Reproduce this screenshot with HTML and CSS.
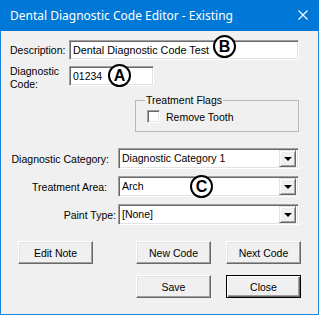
FILE: index.html
```html
<!DOCTYPE html>
<html lang="en">
<head>
    <meta charset="UTF-8">
    <title>Dental Diagnostic Code Editor - Existing</title>
    <link rel="stylesheet" href="styles.css">
</head>
<body>

<div class="window">
    <div class="titlebar">
        <span class="title">Dental Diagnostic Code Editor - Existing</span>
        <svg class="close-x" width="10" height="10" viewBox="0 0 10 10">
            <path d="M0.5 0.5 L9.5 9.5 M9.5 0.5 L0.5 9.5" stroke="#fff" stroke-width="1.1" fill="none"/>
        </svg>
    </div>

    <div class="content">
        <div class="row row-desc">
            <label class="lbl-desc">Description:</label>
            <div class="textbox tb-desc">Dental Diagnostic Code Test</div>
        </div>

        <div class="row row-code">
            <label class="lbl-code">Diagnostic<br>Code:</label>
            <div class="textbox tb-code">01234</div>
        </div>

        <fieldset class="flags">
            <legend>Treatment Flags</legend>
            <div class="check-row">
                <span class="checkbox"></span>
                <span>Remove Tooth</span>
            </div>
        </fieldset>

        <div class="combo-rows">
            <div class="row combo-row">
                <label class="lbl-combo lbl-cat">Diagnostic Category:</label>
                <div class="combo">
                    <span class="combo-text">Diagnostic Category 1</span>
                    <span class="combo-btn"><span class="arrow"></span></span>
                </div>
            </div>
            <div class="row combo-row">
                <label class="lbl-combo lbl-area">Treatment Area:</label>
                <div class="combo">
                    <span class="combo-text">Arch</span>
                    <span class="combo-btn"><span class="arrow"></span></span>
                </div>
            </div>
            <div class="row combo-row">
                <label class="lbl-combo lbl-paint">Paint Type:</label>
                <div class="combo">
                    <span class="combo-text">[None]</span>
                    <span class="combo-btn"><span class="arrow"></span></span>
                </div>
            </div>
        </div>

        <div class="buttons">
            <button class="btn">Edit Note</button>
            <button class="btn">New Code</button>
            <button class="btn">Next Code</button>
            <button class="btn btn-save">Save</button>
            <button class="btn btn-default">Close</button>
        </div>
    </div>

    <!-- callout markers -->
    <span class="marker marker-a">A</span>
    <span class="marker marker-b">B</span>
    <span class="marker marker-c">C</span>
</div>

</body>
</html>
```

FILE: styles.css
```css
body {
    margin: 0;
    background-color: #f0f0f0;
}
.window {
    position: relative;
    width: 319px;
    height: 315px;
    box-sizing: border-box;
    border: 1px solid #1c87d9;
    border-top: none;
    background-color: #f0f0f0;
    font-family: "Liberation Sans", Arial, sans-serif;
    font-size: 10.5px;
    color: #000;
}
.titlebar {
    height: 30px;
    margin: 0 -1px;
    background-color: #0078d7;
    display: flex;
    align-items: center;
    justify-content: space-between;
    padding: 0 11px 1px 10px;
}
.title {
    font-family: "Noto Sans", sans-serif;
    font-size: 12px;
    color: #fff;
}
.close-x {
    display: block;
}
.content {
    padding: 9px 0 0 9px;
}
.row {
    display: flex;
}
.row-desc {
    align-items: center;
}
.lbl-desc {
    width: 59px;
}
.textbox {
    box-sizing: border-box;
    height: 20px;
    background: #fff;
    border: 1px solid;
    border-color: #a0a0a0 #fff #fff #a0a0a0;
    box-shadow: inset 1px 1px #696969, inset -1px -1px #e3e3e3;
    padding: 3px 0 0 3px;
    line-height: 13px;
    white-space: nowrap;
}
.tb-desc {
    width: 230px;
    font-size: 10.8px;
}
.row-code {
    margin-top: 6px;
    align-items: flex-start;
}
.lbl-code {
    width: 59px;
    line-height: 13px;
    margin-top: -1px;
}
.tb-code {
    width: 85px;
}
.flags {
    margin: 2px 0 0 125px;
    width: 164px;
    box-sizing: border-box;
    border: 1px solid #b9b9b9;
    padding: 3px 9px 8px 9px;
}
.flags legend {
    padding: 0 1px;
    line-height: 14px;
}
.check-row {
    display: flex;
    align-items: center;
    gap: 6px;
    margin-left: 2px;
}
.checkbox {
    width: 13px;
    height: 13px;
    box-sizing: border-box;
    background: #fff;
    border: 1px solid;
    border-color: #a0a0a0 #fff #fff #a0a0a0;
    box-shadow: inset 1px 1px #696969, inset -1px -1px #e3e3e3;
}
.combo-rows {
    margin-top: 16px;
    display: flex;
    flex-direction: column;
    gap: 7px;
}
.combo-row {
    align-items: center;
}
.lbl-combo {
    box-sizing: border-box;
    width: 108px;
    text-align: right;
}
.lbl-cat {
    padding-right: 9px;
}
.lbl-area {
    padding-right: 11px;
}
.lbl-paint {
    padding-right: 2px;
}
.combo {
    box-sizing: border-box;
    width: 181px;
    height: 21px;
    background: #fff;
    border: 1px solid;
    border-color: #a0a0a0 #fff #fff #a0a0a0;
    box-shadow: inset 1px 1px #696969, inset -1px -1px #e3e3e3;
    display: flex;
    align-items: center;
    padding: 1px 2px 2px 2px;
}
.combo-text {
    flex: 1;
    padding-left: 1px;
}
.combo-btn {
    box-sizing: border-box;
    width: 17px;
    height: 17px;
    background: #f0f0f0;
    border: 1px solid;
    border-color: #e3e3e3 #696969 #696969 #e3e3e3;
    box-shadow: inset 1px 1px #fff, inset -1px -1px #a0a0a0;
    display: flex;
    align-items: center;
    justify-content: center;
}
.arrow {
    width: 0;
    height: 0;
    border-left: 4px solid transparent;
    border-right: 4px solid transparent;
    border-top: 4px solid #000;
    margin-top: 1px;
}
.buttons {
    margin: 16px 0 0 8px;
    display: grid;
    grid-template-columns: 118px 90px 75px;
    row-gap: 11px;
}
.btn {
    width: 75px;
    height: 23px;
    box-sizing: border-box;
    background: #f0f0f0;
    border: 1px solid;
    border-color: #fff #696969 #696969 #fff;
    box-shadow: inset -1px -1px #a0a0a0, inset 1px 1px #e3e3e3;
    font-family: "Liberation Sans", Arial, sans-serif;
    font-size: 10.5px;
    color: #000;
    padding: 0;
}
.btn-save {
    grid-column: 2;
}
.btn-default {
    border: 1px solid #000;
    box-shadow: inset 1px 1px #fff, inset -1px -1px #696969, inset -2px -2px #a0a0a0;
}
.marker {
    position: absolute;
    width: 23px;
    height: 23px;
    box-sizing: border-box;
    border: 2px solid #000;
    border-radius: 50%;
    background: #fff;
    font-family: "Liberation Sans", Arial, sans-serif;
    font-size: 16px;
    font-weight: bold;
    line-height: 19px;
    text-align: center;
}
.marker-a {
    left: 107px;
    top: 64px;
}
.marker-b {
    left: 212px;
    top: 35px;
}
.marker-c {
    left: 189px;
    top: 175px;
}
```
